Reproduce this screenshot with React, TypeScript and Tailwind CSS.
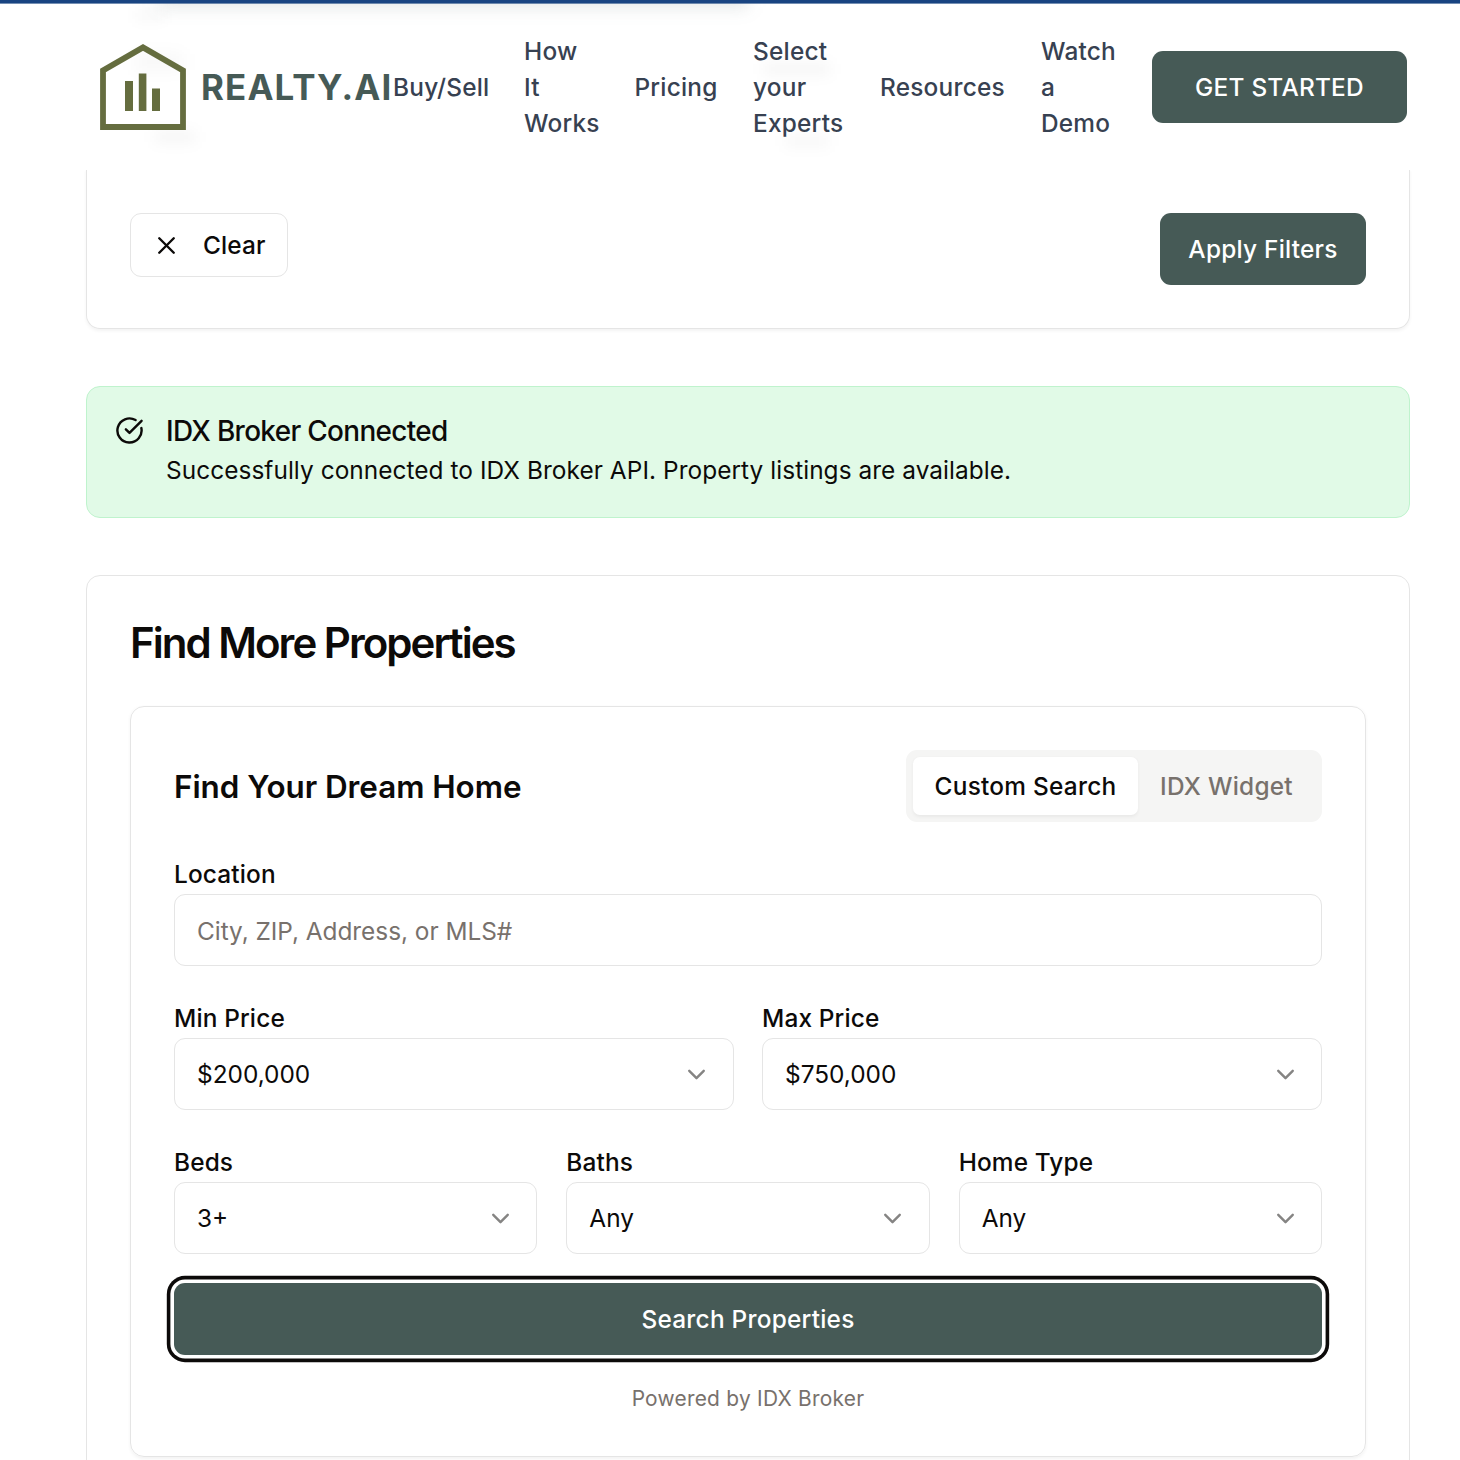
import React from "react";
import { ChevronDown, CircleCheckBig, X } from "lucide-react";

function Logo() {
  return (
    <svg width="86" height="86" viewBox="0 0 86 86" className="block shrink-0" fill="none">
      <path d="M3 83V26.5L43 3.4L83 26.5V83Z" stroke="#656d3f" strokeWidth="5.8" />
      <path d="M25 37h8v30h-8zM38.8 29.6h7.6V67h-7.6zM52 44.4h8V67h-8z" fill="#656d3f" />
    </svg>
  );
}

const links = [
  { lines: ["Buy/Sell"], box: "w-[95px]" },
  { lines: ["How", "It", "Works"], box: "w-[74.5px]" },
  { lines: ["Pricing"], box: "w-[82.5px]" },
  { lines: ["Select", "your", "Experts"], box: "w-[91px]" },
  { lines: ["Resources"], box: "w-[125px]" },
  { lines: ["Watch", "a", "Demo"], box: "w-[74px]" },
];

function Header() {
  return (
    <header className="relative flex h-[170px] items-center border-t-[3px] border-[#194481] bg-white pl-[100px] pt-px">
      <div className="absolute left-0 top-0 h-[166px] w-full overflow-hidden">
        <div className="absolute left-[160px] top-[-20px] h-6 w-[588px] bg-[#465a56]/15 blur-[9px]" />
        <div className="absolute left-[135px] top-[4px] h-4 w-[30px] bg-black/2 blur-[6px]" />
        <div className="absolute left-[155px] top-[128px] h-3 w-[40px] bg-black/4 blur-[7px]" />
        <div className="absolute left-[135px] top-[51px] h-4 w-[48px] bg-black/3 blur-[8px]" />
        <div className="absolute left-[764px] top-[60px] h-3 w-[66px] bg-black/4 blur-[7px]" />
        <div className="absolute left-[785px] top-[132px] h-3 w-[44px] bg-black/3 blur-[7px]" />
        <div className="absolute left-0 top-0 h-px w-full bg-[#194481]/60" />
      </div>
      <div className="relative flex w-[293px] items-center gap-[15px]">
        <Logo />
        <span className="whitespace-nowrap text-[34.9px] font-bold leading-none tracking-[1.15px] text-[#465a56]">REALTY.AI</span>
      </div>
      <nav className="relative flex items-center gap-9 whitespace-nowrap text-[24.4px] font-medium leading-9 tracking-[0.22px] text-[#374151]">
        {links.map((l) => (
          <a key={l.lines[0]} className={l.box}>
            {l.lines.map((t) => (
              <span key={t} className="block">{t}</span>
            ))}
          </a>
        ))}
      </nav>
      <button className="relative ml-[37px] h-[72px] w-[255px] rounded-[11px] bg-[#465a56] pt-px text-[24.4px] font-medium tracking-[0.23px] text-white">GET STARTED</button>
    </header>
  );
}

function Field({ label, value, chevronEdge = "pr-[21px]" }: { label: string; value: string; chevronEdge?: string }) {
  return (
    <div className="flex flex-1 flex-col">
      <span className="h-9 text-[24.4px] font-medium leading-8 tracking-[0.15px]">{label}</span>
      <div className={`flex h-[72px] items-center justify-between rounded-[11px] border border-[#e5e5e5] pl-[22px] text-[24.4px] ${chevronEdge}`}>
        <span>{value}</span>
        <ChevronDown size={29} strokeWidth={2} className="text-[#858483]" />
      </div>
    </div>
  );
}

export default function App() {
  return (
    <div className="h-[1460px] w-[1460px] overflow-hidden bg-white font-['Inter',sans-serif] text-[#0c0a09]">
      <Header />
      <main className="flex flex-col pl-[86px] pr-[50px]">
        <section className="flex h-[159px] items-start justify-between rounded-b-[14px] border border-t-0 border-[#e5e5e5] px-[43px] pt-[43px] shadow-[0_1.8px_3.6px_rgba(0,0,0,0.05)]">
          <button className="flex h-16 w-[158px] items-center rounded-[11px] border border-[#e5e5e5] pl-[21px] text-[24.4px] font-medium tracking-[0.15px]">
            <X size={29} strokeWidth={2} className="mr-[22px]" />
            <span>Clear</span>
          </button>
          <button className="h-[72px] w-[206px] rounded-[11px] bg-[#465a56] text-[24.4px] font-medium tracking-[0.23px] text-white">Apply Filters</button>
        </section>

        <section className="mt-[57px] flex h-[132px] rounded-[14px] border border-[#bff3cd] bg-[#e1fae7] pl-7 pt-7">
          <CircleCheckBig size={29} strokeWidth={2} className="mr-[22px] mt-px shrink-0" />
          <div>
            <h5 className="text-[27.9px] font-medium leading-8 tracking-[-0.66px]">IDX Broker Connected</h5>
            <p className="mt-[3px] text-[24.4px] leading-10 tracking-[0.06px]">Successfully connected to IDX Broker API. Property listings are available.</p>
          </div>
        </section>

        <section className="mt-[57px] h-[1000px] rounded-[14px] border border-[#e5e5e5] px-[43px] pt-[42px]">
          <h2 className="text-[42px] font-semibold leading-[50px] tracking-[-1.98px]">Find More Properties</h2>
          <div className="mt-[38px] flex h-[751px] flex-col rounded-[14px] border border-[#e5e5e5] px-[43px] pt-[43px] shadow-[0_1.8px_3.6px_rgba(0,0,0,0.05)]">
            <div className="flex h-[72px] items-center justify-between">
              <h3 className="pt-[3px] text-[31.4px] font-semibold tracking-[-0.04px]">Find Your Dream Home</h3>
              <div className="flex h-[72px] w-[416px] rounded-[11px] bg-[#f5f5f4] p-[7px] text-[24.4px] font-medium tracking-[0.25px]">
                <div className="flex h-[58px] w-[225px] items-center justify-center rounded-[7px] bg-white shadow-[0_1.8px_3.6px_rgba(0,0,0,0.05)]">Custom Search</div>
                <div className="flex h-[58px] w-[177px] items-center justify-center text-[#78716c]">IDX Widget</div>
              </div>
            </div>
            <div className="mt-9 h-9 text-[24.4px] font-medium leading-8 tracking-[0.15px]">Location</div>
            <div className="flex h-[72px] items-center rounded-[11px] border border-[#e5e5e5] pl-[22px] pt-[3px] text-[24.4px] tracking-[-0.03px] text-[#78716c]">City, ZIP, Address, or MLS#</div>
            <div className="mt-9 flex gap-7">
              <Field label="Min Price" value="$200,000" chevronEdge="pr-[22px]" />
              <Field label="Max Price" value="$750,000" />
            </div>
            <div className="mt-9 flex gap-[29px]">
              <Field label="Beds" value="3+" />
              <Field label="Baths" value="Any" chevronEdge="pr-[22px]" />
              <Field label="Home Type" value="Any" />
            </div>
            <button className="mt-[29px] h-[72px] shrink-0 rounded-[11px] bg-[#465a56] text-[24.4px] font-medium tracking-[0.25px] text-white shadow-[0_0_0_3.6px_#fff,0_0_0_7.2px_#0c0a09]">Search Properties</button>
            <p className="mt-7 text-center text-[20.9px] leading-8 tracking-[0.25px] text-[#78716c]">Powered by IDX Broker</p>
          </div>
        </section>
      </main>
    </div>
  );
}
